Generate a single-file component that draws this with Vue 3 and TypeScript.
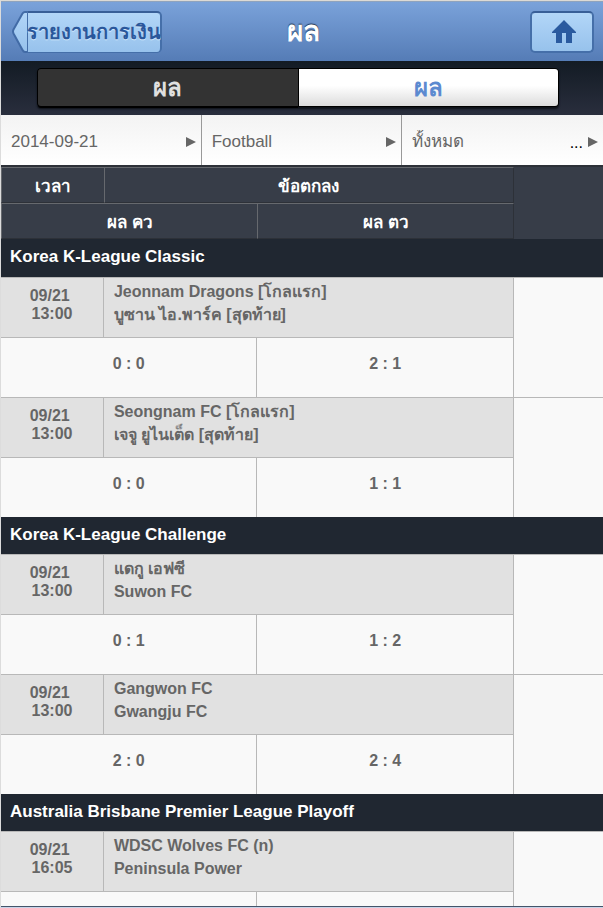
<script setup lang="ts">
import { ref } from 'vue'

interface Match {
  date: string
  time: string
  home: string
  away: string
  firstHalf: string
  fullTime: string
}

interface League {
  name: string
  matches: Match[]
}

interface Filter {
  id: string
  label: string
  value: string
  more: boolean
}

const activeTab = ref(0)
const tabs: string[] = ['ผล', 'ผล']

const filters = ref<Filter[]>([
  { id: 'date', label: 'Date', value: '2014-09-21', more: false },
  { id: 'sport', label: 'Sport', value: 'Football', more: false },
  { id: 'league', label: 'League', value: 'ทั้งหมด', more: true },
])

const leagues: League[] = [
  {
    name: 'Korea K-League Classic',
    matches: [
      { date: '09/21', time: '13:00', home: 'Jeonnam Dragons [โกลแรก]', away: 'บูซาน ไอ.พาร์ค [สุดท้าย]', firstHalf: '0 : 0', fullTime: '2 : 1' },
      { date: '09/21', time: '13:00', home: 'Seongnam FC [โกลแรก]', away: 'เจจู ยูไนเต็ด [สุดท้าย]', firstHalf: '0 : 0', fullTime: '1 : 1' },
    ],
  },
  {
    name: 'Korea K-League Challenge',
    matches: [
      { date: '09/21', time: '13:00', home: 'แดกู เอฟซี', away: 'Suwon FC', firstHalf: '0 : 1', fullTime: '1 : 2' },
      { date: '09/21', time: '13:00', home: 'Gangwon FC', away: 'Gwangju FC', firstHalf: '2 : 0', fullTime: '2 : 4' },
    ],
  },
  {
    name: 'Australia Brisbane Premier League Playoff',
    matches: [
      { date: '09/21', time: '16:05', home: 'WDSC Wolves FC (n)', away: 'Peninsula Power', firstHalf: '', fullTime: '' },
    ],
  },
]
</script>

<template>
  <div class="page">
    <header class="topbar">
      <a class="back" href="#report">
        <svg class="back-tip" viewBox="0 0 15 42" aria-hidden="true">
          <defs>
            <linearGradient id="tip" x1="0" y1="0" x2="0" y2="1">
              <stop offset="0" stop-color="#b2d6f8" />
              <stop offset="1" stop-color="#97c2ec" />
            </linearGradient>
          </defs>
          <path d="M15 1H13Q11.500 1 10.500 2.500L1.500 18.500Q0.500 20.500 1.500 22.500L10.500 39Q11.500 41 13 41H15Z" fill="url(#tip)" />
          <path d="M15 1H13Q11.500 1 10.500 2.500L1.500 18.500Q0.500 20.500 1.500 22.500L10.500 39Q11.500 41 13 41H15" fill="none" stroke="#426ba6" stroke-width="2" />
        </svg>
        <span class="back-text">รายงานการเงิน</span>
      </a>
      <h1 class="title">ผล</h1>
      <a class="home" href="#home" aria-label="Home">
        <svg width="26" height="24" viewBox="0 0 26 24" aria-hidden="true">
          <path d="M13 0L25 12V13H21V23H15V13H11V23H5V13H1V12Z" fill="#2a5a9f" />
        </svg>
      </a>
    </header>

    <nav class="tabs">
      <div class="tab-group">
        <button
          v-for="(tab, i) in tabs"
          :key="i"
          type="button"
          class="tab"
          :class="{ active: activeTab === i }"
          @click="activeTab = i"
        >{{ tab }}</button>
      </div>
    </nav>

    <div class="filters">
      <div v-for="f in filters" :key="f.id" class="filter">
        <select :id="f.id" v-model="f.value" :aria-label="f.label">
          <option>{{ f.value }}</option>
        </select>
        <span v-if="f.more" class="more">...</span>
        <svg class="arrow" width="10" height="10" viewBox="0 0 10 10" aria-hidden="true">
          <path d="M0 0L10 5L0 10Z" fill="#666" />
        </svg>
      </div>
    </div>

    <main class="results">
      <table>
        <colgroup>
          <col class="c-time" />
          <col class="c-half" />
          <col class="c-full" />
          <col class="c-rest" />
        </colgroup>
        <thead>
          <tr>
            <th>เวลา</th>
            <th colspan="2" class="last">ข้อตกลง</th>
            <td rowspan="2"></td>
          </tr>
          <tr>
            <th colspan="2">ผล คว</th>
            <th class="last">ผล ตว</th>
          </tr>
        </thead>
        <tbody v-for="league in leagues" :key="league.name">
          <tr class="league">
            <th colspan="4">{{ league.name }}</th>
          </tr>
          <template v-for="(m, i) in league.matches" :key="i">
            <tr class="match">
              <td class="time">{{ m.date }}&nbsp;<br />{{ m.time }}</td>
              <td colspan="2" class="teams">{{ m.home }}<br />{{ m.away }}</td>
              <td rowspan="2" class="rest"></td>
            </tr>
            <tr class="score">
              <td colspan="2">{{ m.firstHalf }}</td>
              <td>{{ m.fullTime }}</td>
            </tr>
          </template>
        </tbody>
      </table>
    </main>
  </div>
</template>

<style>
body {
  margin: 0;
}
</style>

<style scoped>
.page,
.page * {
  box-sizing: border-box;
}
.page {
  display: flex;
  flex-direction: column;
  height: 100vh;
  overflow: hidden;
  border-top: 1px solid #dcdad5;
  border-left: 1px solid #dcdcdc;
  border-bottom: 1px solid #c8d4e8;
  background: #f9f9f9;
  color: #666;
  font-family: "Liberation Sans", Arial, sans-serif;
  font-size: 16px;
}
.topbar {
  flex: none;
  display: grid;
  grid-template-columns: 1fr auto 1fr;
  align-items: center;
  height: 60px;
  padding: 0 9px 0 11px;
  border-top: 1px solid #8fa3bd;
  background: linear-gradient(#7aa2da, #557cb6);
}
.back {
  display: flex;
  justify-self: start;
  height: 42px;
  color: #2a579b;
  text-decoration: none;
}
.back-tip {
  width: 15px;
  height: 42px;
}
.back-text {
  display: flex;
  align-items: center;
  justify-content: center;
  width: 135px;
  border: 1px solid #456fa9;
  border-top: 2px solid #385f98;
  border-right-width: 2px;
  border-radius: 0 5px 5px 0;
  background: linear-gradient(#b2d6f8, #97c2ec);
  font-size: 20px;
  font-weight: bold;
  white-space: nowrap;
  text-shadow: 0 1px 0 #d5e9fc;
}
.title {
  margin: 0;
  color: #fff;
  font-size: 28px;
  line-height: 32px;
  text-shadow: 0 -1px 1px #1f3657;
}
.home {
  display: flex;
  align-items: center;
  justify-content: center;
  justify-self: end;
  width: 64px;
  height: 42px;
  padding-left: 3px;
  border: 2px solid #456fa9;
  border-top-color: #385f98;
  border-radius: 5px;
  background: linear-gradient(#b2d6f8, #97c2ec);
}
.tabs {
  flex: none;
  height: 54px;
  padding: 7px 44px 7px 36px;
  background: linear-gradient(#131b24, #292e3d);
}
.tab-group {
  display: flex;
  height: 39px;
  border: 1px solid #000;
  border-radius: 4px;
  background: #000;
  box-shadow: 0 2px 2px #0d1118;
}
.tab {
  flex: 1;
  padding: 0;
  border: 0;
  border-radius: 0 3px 3px 0;
  background: linear-gradient(#fff 45%, #dcdcdc);
  color: #5c8ad0;
  font: bold 24px/36px "Liberation Sans", Arial, sans-serif;
}
.tab.active {
  margin-right: 1px;
  border-radius: 3px 0 0 3px;
  background: #333;
  box-shadow: 0 2px 0 #000;
  color: #e0e0e0;
}
.filters {
  flex: none;
  display: grid;
  grid-template-columns: 1fr 1fr 1fr;
  height: 52px;
  border-bottom: 2px solid #2d3138;
  background: linear-gradient(#f3f3f3, #fff);
}
.filter {
  display: flex;
  align-items: center;
  min-width: 0;
  padding: 3px 5px 0 10px;
  border-right: 1px solid #999;
}
.filter:last-child {
  border-right: 0;
}
.filter select {
  flex: 1;
  min-width: 0;
  height: 40px;
  padding: 0;
  border: 0;
  appearance: none;
  background: transparent;
  color: #666;
  font: 17px/24px "Liberation Sans", Arial, sans-serif;
}
.more {
  padding: 3px 5px 0 0;
  color: #000;
}
.arrow {
  flex: none;
}
.results {
  flex: 1;
  min-height: 0;
  overflow-y: auto;
  scrollbar-width: none;
  border-bottom: 1px solid #44546a;
}
table {
  width: 100%;
  table-layout: fixed;
  border-collapse: separate;
  border-spacing: 0;
  font-weight: bold;
}
.c-time {
  width: 17.100%;
}
.c-half {
  width: 25.500%;
}
.c-full {
  width: 42.600%;
}
th,
td {
  padding: 0;
}
thead {
  background: #373d48;
}
thead th {
  height: 36px;
  padding-top: 3px;
  border-top: 1px solid #66696e;
  border-left: 1px solid #66696e;
  border-bottom: 1px solid #2d3138;
  color: #fff;
  font-size: 17px;
  line-height: 24px;
}
thead .last {
  border-right: 1px solid #2d3138;
}
.league th {
  height: 37px;
  padding: 6px 0 0 9px;
  background: #202731;
  color: #fff;
  font-size: 17px;
  line-height: 24px;
  text-align: left;
  vertical-align: top;
}
thead + tbody .league th {
  height: 38px;
}
.match td {
  height: 60px;
  border-top: 1px solid #b8b8b8;
  border-right: 1px solid #b8b8b8;
  background: #e1e1e1;
}
.match .time {
  padding-bottom: 6px;
  line-height: 18px;
  text-align: center;
}
.match .teams {
  padding: 2px 0 0 10px;
  line-height: 23px;
  vertical-align: top;
}
.match .rest {
  border-right: 0;
  background: #f9f9f9;
}
.score td {
  height: 60px;
  padding-bottom: 8px;
  border-top: 1px solid #b8b8b8;
  border-right: 1px solid #b8b8b8;
  text-align: center;
}
</style>
